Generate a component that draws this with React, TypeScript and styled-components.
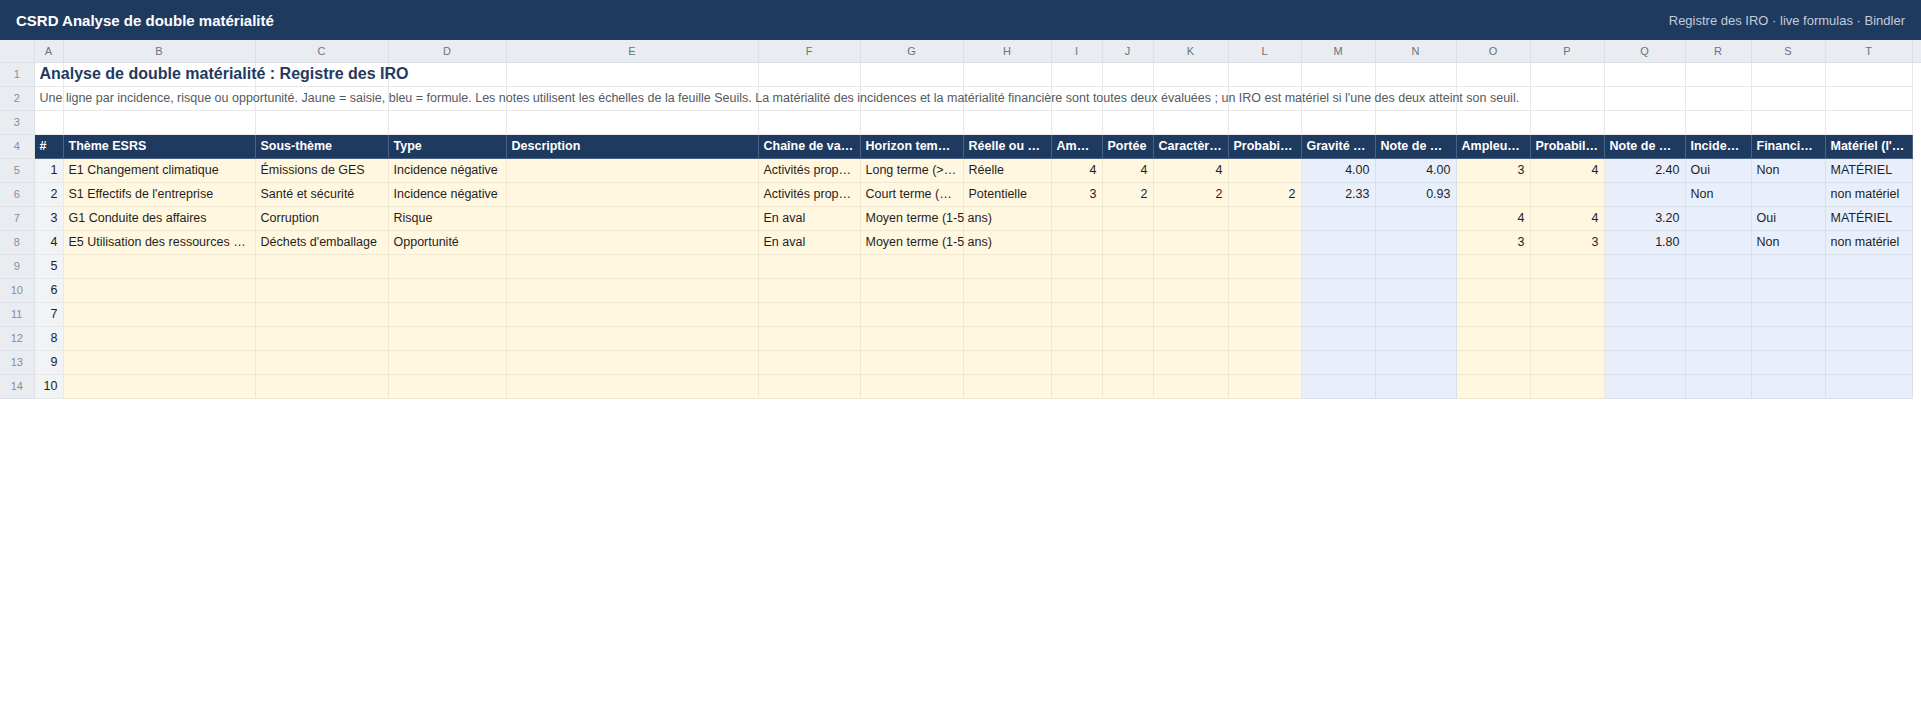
import styled, { createGlobalStyle } from 'styled-components';

type Kind = 'blank' | 'num' | 'input' | 'formula';

const GlobalStyle = createGlobalStyle`
	html, body {
		margin: 0;
		padding: 0;
		background: #ffffff;
		font-family: 'Liberation Sans', Arial, sans-serif;
	}
`;

const letters = 'ABCDEFGHIJKLMNOPQRST'.split('');
const widths = [29, 192, 133, 118, 252, 102, 103, 88, 51, 51, 75, 73, 74, 81, 74, 74, 81, 66, 74, 87];

// which data columns are inputs (yellow) and which are formulas (blue)
const kinds: Kind[] = [
	'num', 'input', 'input', 'input', 'input', 'input', 'input', 'input', 'input', 'input',
	'input', 'input', 'formula', 'formula', 'input', 'input', 'formula', 'formula', 'formula', 'formula',
];
const numeric = [0, 8, 9, 10, 11, 12, 13, 14, 15, 16];

const headers = [
	'#', 'Thème ESRS', 'Sous-thème', 'Type', 'Description', 'Chaîne de valeur', 'Horizon temporel',
	'Réelle ou potentielle', 'Ampleur', 'Portée', 'Caractère irrémédiable', 'Probabilité',
	'Gravité (incidence)', "Note de matérialité d'incidence", 'Ampleur financière', 'Probabilité financière',
	'Note de matérialité financière', 'Incidence matérielle', 'Financièrement matériel', "Matériel (l'un ou l'autre)",
];

const rows: string[][] = [
	['1', 'E1 Changement climatique', 'Émissions de GES', 'Incidence négative', '', 'Activités propres', 'Long terme (>5 ans)', 'Réelle', '4', '4', '4', '', '4.00', '4.00', '3', '4', '2.40', 'Oui', 'Non', 'MATÉRIEL'],
	['2', "S1 Effectifs de l'entreprise", 'Santé et sécurité', 'Incidence négative', '', 'Activités propres', 'Court terme (<1 an)', 'Potentielle', '3', '2', '2', '2', '2.33', '0.93', '', '', '', 'Non', '', 'non matériel'],
	['3', 'G1 Conduite des affaires', 'Corruption', 'Risque', '', 'En aval', 'Moyen terme (1-5 ans)', '', '', '', '', '', '', '', '4', '4', '3.20', '', 'Oui', 'MATÉRIEL'],
	['4', 'E5 Utilisation des ressources et économie circulaire', "Déchets d'emballage", 'Opportunité', '', 'En aval', 'Moyen terme (1-5 ans)', '', '', '', '', '', '', '', '3', '3', '1.80', '', 'Non', 'non matériel'],
	...[5, 6, 7, 8, 9, 10].map((n) => [String(n), ...Array(19).fill('')]),
];

const App = () => {
	return (
		<Page>
			<GlobalStyle />
			<TopBar>
				<AppTitle>CSRD Analyse de double matérialité</AppTitle>
				<AppMeta>Registre des IRO · live formulas · Bindler</AppMeta>
			</TopBar>
			<Sheet>
				<colgroup>
					<col style={{ width: 34 }} />
					{widths.map((w, i) => (
						<col key={i} style={{ width: w }} />
					))}
					<col />
				</colgroup>
				<thead>
					<tr>
						<Corner />
						{letters.map((l) => (
							<ColHead key={l}>{l}</ColHead>
						))}
						<ColHead />
					</tr>
				</thead>
				<tbody>
					<tr>
						<RowHead>1</RowHead>
						<TitleCell>Analyse de double matérialité : Registre des IRO</TitleCell>
						{letters.slice(1).map((l) => (
							<Cell key={l} $kind='blank' />
						))}
						<Filler />
					</tr>
					<tr>
						<RowHead>2</RowHead>
						<NoteCell>
							Une ligne par incidence, risque ou opportunité. Jaune = saisie, bleu = formule. Les notes utilisent
							les échelles de la feuille Seuils. La matérialité des incidences et la matérialité financière sont
							toutes deux évaluées ; un IRO est matériel si l'une des deux atteint son seuil.
						</NoteCell>
						{letters.slice(1).map((l) => (
							<Cell key={l} $kind='blank' />
						))}
						<Filler />
					</tr>
					<tr>
						<RowHead>3</RowHead>
						{letters.map((l) => (
							<Cell key={l} $kind='blank' />
						))}
						<Filler />
					</tr>
					<tr>
						<RowHead>4</RowHead>
						{headers.map((h) => (
							<HeadCell key={h}>{h}</HeadCell>
						))}
						<Filler />
					</tr>
					{rows.map((row, r) => (
						<tr key={r}>
							<RowHead>{r + 5}</RowHead>
							{row.map((value, c) => {
								const nextEmpty = c < row.length - 1 && row[c + 1] === '';
								return (
									<Cell
										key={c}
										$kind={kinds[c]}
										$right={numeric.includes(c)}
										$spill={nextEmpty && !numeric.includes(c)}
									>
										{value}
									</Cell>
								);
							})}
							<Filler />
						</tr>
					))}
				</tbody>
			</Sheet>
		</Page>
	);
};

const Page = styled.div`
	width: 1921px;
	min-height: 720px;
	display: flex;
	flex-direction: column;
	background: #ffffff;
`;

const TopBar = styled.header`
	height: 40px;
	flex-shrink: 0;
	display: flex;
	align-items: center;
	justify-content: space-between;
	padding: 0 16px;
	background: #1f3a5f;
	color: #ffffff;
`;

const AppTitle = styled.h1`
	margin: 0;
	font-size: 15px;
	font-weight: 700;
	letter-spacing: 0;
`;

const AppMeta = styled.span`
	font-size: 13px;
	color: #c3ccd9;
`;

const Sheet = styled.table`
	width: 100%;
	table-layout: fixed;
	border-collapse: collapse;
	font-size: 12.5px;
	color: #222222;

	td,
	th {
		height: 24px;
		padding: 0 5px;
		box-sizing: border-box;
		white-space: nowrap;
	}
`;

const Corner = styled.th`
	background: #e9ecf1;
	border-bottom: 1px solid #dde1e7;
	height: 22px !important;
`;

const ColHead = styled.th`
	background: #e9ecf1;
	border: 1px solid #dde1e7;
	border-top: none;
	color: #6b7280;
	font-size: 11px;
	font-weight: 400;
	text-align: center;
	height: 22px !important;

	&:last-child {
		border-right: none;
	}
`;

const RowHead = styled.td`
	background: #e9ecf1;
	border: 1px solid #dde1e7;
	border-left: none;
	color: #8a8f98;
	font-size: 11px;
	text-align: center;
`;

const Cell = styled.td<{ $kind: Kind; $right?: boolean; $spill?: boolean }>`
	background: ${({ $kind }) =>
		$kind === 'input' ? '#fff7e0' : $kind === 'formula' ? '#e8effb' : $kind === 'num' ? '#f2f3f4' : '#ffffff'};
	border: 1px solid
		${({ $kind }) => ($kind === 'input' ? '#efe8d2' : $kind === 'formula' ? '#d8e0ec' : '#e8e8e8')};
	text-align: ${({ $right }) => ($right ? 'right' : 'left')};
	overflow: ${({ $spill }) => ($spill ? 'visible' : 'hidden')};
	text-overflow: ${({ $spill }) => ($spill ? 'clip' : 'ellipsis')};
	color: #1f1f1f;
`;

const TitleCell = styled.td`
	border: 1px solid #e8e8e8;
	overflow: visible;
	font-size: 16px;
	font-weight: 700;
	color: #1f3a5f;
`;

const NoteCell = styled.td`
	border: 1px solid #e8e8e8;
	overflow: visible;
	font-size: 12.5px;
	color: #555a60;
`;

const HeadCell = styled.td`
	background: #1f3a5f;
	border: 1px solid #4a6385;
	border-top-color: #1f3a5f;
	color: #ffffff;
	font-weight: 700;
	overflow: hidden;
	text-overflow: ellipsis;
`;

const Filler = styled.td`
	background: #ffffff;
`;

export default App;
